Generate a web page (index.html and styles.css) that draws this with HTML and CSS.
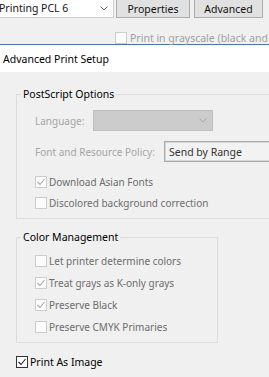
FILE: index.html
```html
<!DOCTYPE html>
<html lang="en">
<head>
  <meta charset="UTF-8" />
  <title>Advanced Print Setup</title>
  <link rel="stylesheet" href="styles.css">
</head>
<body>
  <div class="printer-bar">
    <div class="printer-select">
      <span class="printer-name">Printing PCL 6</span>
      <svg class="chevron" width="8" height="5" viewBox="0 0 8 5"><polyline points="0.5,0.5 4,4 7.5,0.5" fill="none" stroke="#606060" stroke-width="1"/></svg>
    </div>
    <button class="bar-btn btn-props">Properties</button>
    <button class="bar-btn btn-adv">Advanced</button>
  </div>
  <div class="grayscale-row">
    <span class="box disabled"></span>
    <span class="grayscale-text">Print in grayscale (black and white)</span>
  </div>

  <div class="dialog">
    <div class="dialog-title">Advanced Print Setup</div>
    <div class="dialog-body">
      <fieldset class="group group-ps">
        <legend>PostScript Options</legend>
        <div class="group-inner">
          <div class="field-row row-lang">
            <span class="field-label lang-label">Language:</span>
            <div class="combo-disabled">
              <svg class="chevron" width="8" height="5" viewBox="0 0 8 5"><polyline points="0.5,0.5 4,4 7.5,0.5" fill="none" stroke="#a8a8a8" stroke-width="1"/></svg>
            </div>
          </div>
          <div class="field-row row-font">
            <span class="field-label font-label">Font and Resource Policy:</span>
            <div class="policy-box">Send by Range</div>
          </div>
          <div class="check-list list-ps">
            <div class="check-row">
              <span class="box disabled"><svg width="10" height="10" viewBox="0 0 10 10"><polyline points="1.5,5 4,7.5 8.5,2" fill="none" stroke="#a8a8a8" stroke-width="1.1"/></svg></span>
              <span class="check-text">Download Asian Fonts</span>
            </div>
            <div class="check-row">
              <span class="box disabled"></span>
              <span class="check-text">Discolored background correction</span>
            </div>
          </div>
        </div>
      </fieldset>

      <fieldset class="group group-cm">
        <legend>Color Management</legend>
        <div class="group-inner">
          <div class="check-list list-cm">
            <div class="check-row">
              <span class="box disabled"></span>
              <span class="check-text">Let printer determine colors</span>
            </div>
            <div class="check-row">
              <span class="box disabled"><svg width="10" height="10" viewBox="0 0 10 10"><polyline points="1.5,5 4,7.5 8.5,2" fill="none" stroke="#a8a8a8" stroke-width="1.1"/></svg></span>
              <span class="check-text">Treat grays as K-only grays</span>
            </div>
            <div class="check-row">
              <span class="box disabled"><svg width="10" height="10" viewBox="0 0 10 10"><polyline points="1.5,5 4,7.5 8.5,2" fill="none" stroke="#a8a8a8" stroke-width="1.1"/></svg></span>
              <span class="check-text">Preserve Black</span>
            </div>
            <div class="check-row">
              <span class="box disabled"></span>
              <span class="check-text">Preserve CMYK Primaries</span>
            </div>
          </div>
        </div>
      </fieldset>

      <div class="check-row image-row">
        <span class="box enabled"><svg width="10" height="10" viewBox="0 0 10 10"><polyline points="1.5,5 4,7.5 8.5,2" fill="none" stroke="#222" stroke-width="1.1"/></svg></span>
        <span class="image-text">Print As Image</span>
      </div>
    </div>
  </div>
</body>
</html>
```

FILE: styles.css
```css
html, body {
  margin: 0;
  padding: 0;
  width: 269px;
  height: 377px;
  overflow: hidden;
  background: #f0f0f0;
}
body {
  font-family: "Noto Sans", "Open Sans", Arial, sans-serif;
  font-size: 10px;
  color: #000;
}
/* top printer bar */
.printer-bar {
  display: flex;
  align-items: flex-start;
  margin-top: -4px;
  height: 22px;
}
.printer-select {
  box-sizing: border-box;
  width: 114px;
  height: 22px;
  background: #fff;
  border: 1px solid #cfcfcf;
  border-left: none;
  display: flex;
  align-items: center;
  justify-content: space-between;
  padding-right: 5px;
  padding-top: 2px;
}
.printer-name {
  font-size: 10.5px;
  margin-left: -1px;
  color: #111;
}
.bar-btn {
  box-sizing: border-box;
  height: 22px;
  background: #e1e1e1;
  border: 1px solid #adadad;
  font-family: inherit;
  font-size: 10.5px;
  color: #111;
  padding: 3px 0 0 0;
}
.btn-props {
  width: 74px;
  margin-left: 2px;
}
.btn-adv {
  width: 69px;
  margin-left: 4px;
}
.grayscale-row {
  display: flex;
  align-items: center;
  padding-left: 115px;
  margin-top: 13px;
  height: 13px;
}
.grayscale-text {
  color: #a0a0a0;
  font-size: 10.5px;
  white-space: nowrap;
  margin-left: 1px;
}
/* checkboxes */
.box {
  box-sizing: border-box;
  width: 12px;
  height: 12px;
  flex: none;
  display: flex;
  align-items: center;
  justify-content: center;
  margin-right: 2px;
}
.box.disabled {
  background: #fcfcfc;
  border: 1px solid #cccccc;
}
.box.enabled {
  background: #fff;
  border: 1px solid #333;
}
.box svg {
  display: block;
}
/* dialog */
.dialog {
  border-top: 1px solid #2b7fd1;
}
.dialog-title {
  background: #fff;
  height: 27px;
  display: flex;
  align-items: center;
  padding-left: 3px;
  font-size: 10.5px;
}
.dialog-body {
  padding-left: 16px;
}
.group {
  margin: 0;
  padding: 0;
  border: 1px solid #dcdcdc;
  min-width: 0;
}
.group legend {
  margin-left: 4px;
  padding: 0 2px;
  line-height: 14px;
  font-size: 10.5px;
}
.group-ps {
  margin-top: 15px;
  width: 300px;
  padding-bottom: 5px;
}
.group-cm {
  margin-top: 11px;
  width: 202px;
  box-sizing: border-box;
  padding-bottom: 4px;
}
.group-inner {
  padding-left: 18px;
}
.field-row {
  display: flex;
  align-items: center;
  height: 21px;
}
.row-lang {
  margin-top: 9px;
}
.row-font {
  margin-top: 10px;
}
.field-label {
  color: #a6a6a6;
  white-space: nowrap;
}
.lang-label {
  width: 58px;
}
.font-label {
  width: 129px;
}
.combo-disabled {
  box-sizing: border-box;
  width: 120px;
  height: 21px;
  background: #cccccc;
  border: 1px solid #bfbfbf;
  display: flex;
  align-items: center;
  justify-content: flex-end;
  padding-right: 5px;
}
.policy-box {
  box-sizing: border-box;
  width: 130px;
  height: 21px;
  border: 1px solid #a9a9a9;
  box-shadow: inset 0 0 0 1px #d6d6d6;
  background: #f2f2f2;
  padding: 3px 0 0 4px;
  font-size: 10.5px;
  color: #333;
  white-space: nowrap;
}
.check-list {
  display: flex;
  flex-direction: column;
}
.list-ps {
  margin-top: 9px;
}
.list-ps .check-row {
  height: 21px;
}
.list-cm {
  margin-top: 6px;
}
.list-cm .check-row {
  height: 22px;
}
.check-row {
  display: flex;
  align-items: center;
}
.check-text {
  color: #6d6d6d;
  white-space: nowrap;
}
.image-row {
  margin-top: 8px;
  height: 22px;
}
.image-text {
  color: #000;
  font-size: 10.5px;
}
```
